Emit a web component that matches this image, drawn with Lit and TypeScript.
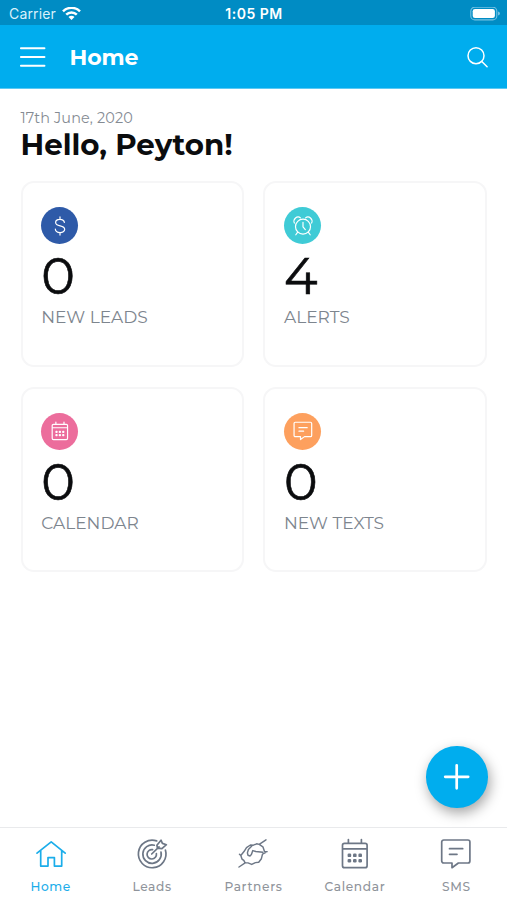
import { LitElement, html, css, svg, nothing } from "lit";
import { customElement, property } from "lit/decorators.js";

const calendar = svg`<path d="M5.500 5.300h20.600a2 2 0 0 1 2 2v20.400a2 2 0 0 1-2 2H5.500a2 2 0 0 1-2-2V7.300a2 2 0 0 1 2-2zM3.500 10.800h24.600M9.400 5V1.600M22.400 5V1.600"/><g fill="currentColor" stroke="none"><rect x="8.600" y="15.500" width="3.600" height="3.600" rx="1.200"/><rect x="14" y="15.500" width="3.600" height="3.600" rx="1.200"/><rect x="19.400" y="15.500" width="3.600" height="3.600" rx="1.200"/><rect x="8.600" y="20.900" width="3.600" height="3.600" rx="1.200"/><rect x="14" y="20.900" width="3.600" height="3.600" rx="1.200"/><rect x="19.400" y="20.900" width="3.600" height="3.600" rx="1.200"/></g>`;

const icons: Record<string, unknown> = {
  home: svg`<path d="M2 15.200 16.200 3.800l14 11.400M5.700 12.500V28.100h7.300v-8.500h6.400v8.500h7.300V12.500"/>`,
  target: svg`<path d="M20.700 2.900A13.800 13.800 0 1 0 29.400 12M18.300 7.200A9.200 9.200 0 1 0 25 14M16.600 11.700a4.700 4.700 0 1 0 3.800 3.900M15.700 16 23 8.800M20.900 7.200 25 2.200l1.400 3.200 4 1.300-4.500 4-4.500-.5z"/>`,
  partners: svg`<g stroke-width="1.45"><path d="m29 1.800-6.800 4.600-2.600-.6-3.200 1.400-3-.2-3.900 2.600-2.300 3.700-3.400 4.200 1.200 3.600 1.800 1.300 1.200 2.300 3 .2 3.700 1.500 3.700-1.800 3.300-.3 2.700-3.600 1.100-4.500 3.300-1.900M22.200 6.400l3.700 2.400 1.600 4.600 2.600.2M14.800 8.100l-3.400 3.400-1 3.400.6 2.400 2 .7 1.400-1.400 1.400-4 3 .9 7 .7M2 29l6.500-4.300M3.800 17.500l-1.300-1.300"/></g>`,
  calendar,
  chat: svg`<path d="M3.700 2h24.200a2 2 0 0 1 2 2v19a2 2 0 0 1-2 2h-9.500l-6.400 4.700v-4.700H3.700a2 2 0 0 1-2-2V4a2 2 0 0 1 2-2zM9.500 10.700h13.200M9.500 16.300h7.500"/>`,
  dollar: svg`<path d="M16 1.500v4M16 26.500v4M23 10.300C22 3.500 9 4 9 10.300c0 7.500 14.500 3.500 14.500 11 0 7-14.500 7.200-15-.5"/>`,
  alarm: svg`<circle cx="16" cy="17" r="12"/><path d="M16 10v7.500l3.700 4.200M7.500 25.700 4.500 30M24.500 25.700l3 4.300M2.200 11.300C-.5 5 6.500-1.300 12 3M29.800 11.300C32.500 5 25.500-1.300 20 3"/>`,
  menu: svg`<path d="M.9 1.200h23.600M.9 10h23.600M.9 18.800h23.600"/>`,
  search: svg`<circle cx="9" cy="8.700" r="8"/><path d="m14.800 14.500 5.300 5.300"/>`,
  plus: svg`<path d="M12.700 1.300v23M1.200 12.800h23"/>`,
};

@customElement("ui-icon")
class UiIcon extends LitElement {
  @property() name = "home";
  @property() box = "0 0 32 32";
  static styles = css`
    :host { display: block; }
    .glyph { display: block; width: 100%; height: 100%; overflow: visible; fill: none; stroke: currentColor; stroke-width: var(--stroke, 1.7); stroke-linejoin: round; stroke-linecap: round; }
  `;
  render() {
    return html`<svg class="glyph" viewBox=${this.box}>${icons[this.name] ?? nothing}</svg>`;
  }
}

const cards = [
  { tone: "blue", icon: "dollar", value: "0", label: "NEW LEADS" },
  { tone: "teal", icon: "alarm", value: "4", label: "ALERTS" },
  { tone: "pink", icon: "calendar", value: "0", label: "CALENDAR" },
  { tone: "orange", icon: "chat", value: "0", label: "NEW TEXTS" },
];

const tabs = [
  { icon: "home", label: "Home" },
  { icon: "target", label: "Leads" },
  { icon: "partners", label: "Partners" },
  { icon: "calendar", label: "Calendar" },
  { icon: "chat", label: "SMS" },
];

@customElement("app-root")
class AppRoot extends LitElement {
  static styles = css`
    :host { display: flex; flex-direction: column; position: relative; height: 900px; background: #fff; overflow: hidden; font-family: Montserrat, Inter, sans-serif; color: #0b0c0e; }
    * { box-sizing: border-box; }
    .status { height: 25px; flex: none; background: #008cc4; color: #fff; display: grid; grid-template-columns: 1fr auto 1fr; align-items: center; padding: 2px 7px 0 9px; font: 14px/20px Inter, sans-serif; }
    .carrier { display: flex; align-items: center; gap: 6px; letter-spacing: .15px; color: #d9f1fb; }
    .wifi { width: 19px; height: 14px; display: block; }
    .time { font-weight: 600; font-size: 14px; letter-spacing: .5px; margin-right: 1px; }
    .battery { justify-self: end; width: 30px; height: 14px; display: block; }
    .bar { height: 64px; flex: none; background: #00adee; color: #fff; display: flex; align-items: center; padding: 1px 19px 0 20px; border-bottom: 1px solid #5cc9f3; }
    .menu { width: 25px; height: 20.500px; --stroke: 1.9; }
    .title { margin-left: 24.500px; padding-top: 1px; font-size: 22px; line-height: 26px; font-weight: 700; flex: 1; letter-spacing: -.1px; }
    .search { width: 21px; height: 21px; --stroke: 1.500; }
    .main { flex: 1; padding: 20px 20px 0 20.500px; }
    .date { height: 18px; line-height: 18px; font-size: 14.400px; color: #858b93; letter-spacing: .14px; }
    .hello { margin: 0; height: 36px; line-height: 36px; font-size: 29.300px; font-weight: 700; letter-spacing: 0; }
    .grid { margin-top: 18px; display: grid; grid-template-columns: 1fr 1fr; gap: 20px 19px; }
    .card { height: 185.500px; border: 2px solid #f6f6f7; border-radius: 13px; padding: 24px 18.800px; background: #fff; }
    .dot { width: 37px; height: 37px; border-radius: 50%; color: #fff; display: grid; place-items: center; }
    .dot ui-icon { width: 20px; height: 20px; --stroke: 1.9; }
    .blue { background: #2e5aa8; } .teal { background: #3fcbd6; } .pink { background: #ec6d9c; } .orange { background: #fda05e; }
    .value { height: 63.400px; line-height: 65px; font-size: 50.800px; font-weight: 400; -webkit-text-stroke: .6px currentColor; }
    .label { height: 20px; line-height: 20px; font-size: 17px; color: #7d858e; font-weight: 400; }
    .fab { position: absolute; left: 426px; top: 746px; width: 61.500px; height: 61.500px; border: 0; padding: 0; border-radius: 50%; background: #00adee; color: #fff; display: grid; place-items: center; box-shadow: 2px 5px 13px rgba(0,0,0,.36); }
    .fab ui-icon { width: 25px; height: 25px; --stroke: 2.700; }
    .tabs { height: 73px; flex: none; border-top: 1px solid #e9eaec; background: #fff; display: grid; grid-template-columns: repeat(5, 1fr); }
    .tab { display: flex; flex-direction: column; align-items: center; padding-top: 9.500px; color: #6d7786; }
    .tab ui-icon { width: 32px; height: 32px; --stroke: 1.700; }
    .name { margin-top: 9.500px; height: 16px; line-height: 16px; font-size: 12.200px; letter-spacing: .65px; color: #8f949b; font-weight: 500; }
    .on, .on .name { color: #1badea; }
  `;
  render() {
    return html`
      <div class="status">
        <div class="carrier"><span>Carrier</span>
          <svg class="wifi" viewBox="0 0 19 14" fill="none" stroke="#fff" stroke-width="2.500"><path d="M1 4.400a12 12 0 0 1 17 0M4.200 7.700a7.500 7.500 0 0 1 10.600 0"/><path d="M6.500 9.900a4.200 4.200 0 0 1 6 0l-3 3z" fill="#fff" stroke="none"/></svg>
        </div>
        <div class="time">1:05 PM</div>
        <svg class="battery" viewBox="0 0 30 14"><rect x=".8" y=".1" width="26" height="12.800" rx="4" fill="none" stroke="#74c1e2" stroke-width="1.100"/><rect x="2.700" y="2" width="22.200" height="9" rx="2.300" fill="#fff"/><path d="M28 4.500v4q2-.5 2-2t-2-2z" fill="#74c1e2"/></svg>
      </div>
      <div class="bar">
        <ui-icon class="menu" name="menu" box="0 0 25 20.5"></ui-icon>
        <div class="title">Home</div>
        <ui-icon class="search" name="search" box="0 0 21 21"></ui-icon>
      </div>
      <div class="main">
        <div class="date">17th June, 2020</div>
        <h1 class="hello">Hello, Peyton!</h1>
        <div class="grid">
          ${cards.map((c) => html`<div class="card">
            <div class="dot ${c.tone}"><ui-icon name=${c.icon}></ui-icon></div>
            <div class="value">${c.value}</div>
            <div class="label">${c.label}</div>
          </div>`)}
        </div>
      </div>
      <div class="tabs">
        ${tabs.map((t, i) => html`<div class="tab ${i === 0 ? "on" : ""}"><ui-icon name=${t.icon}></ui-icon><div class="name">${t.label}</div></div>`)}
      </div>
      <button class="fab"><ui-icon name="plus" box="0 0 25 25"></ui-icon></button>
    `;
  }
}
